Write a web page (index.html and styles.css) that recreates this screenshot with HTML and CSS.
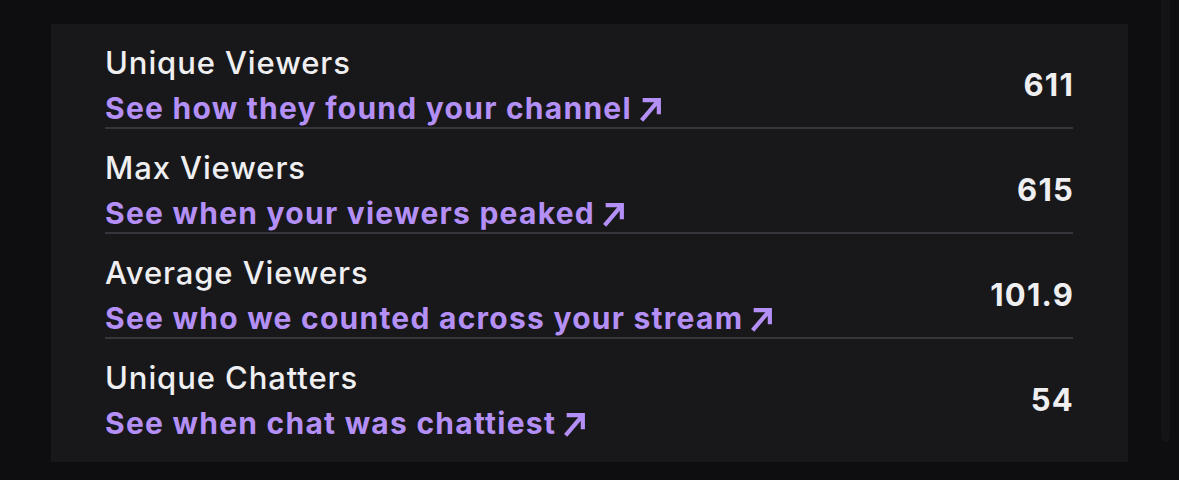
FILE: index.html
```html
<!DOCTYPE html>
<html lang="en">
<head>
<meta charset="utf-8">
<title>Stream stats</title>
<link rel="stylesheet" href="styles.css">
</head>
<body>
<div class="page">
  <main class="main">
    <section class="card">
      <div class="row">
        <div class="info">
          <div class="title">Unique Viewers</div>
          <a class="link" href="#">See how they found your channel<svg class="arrow" viewBox="0 0 20 23" aria-hidden="true"><path d="M2.5 2 H18 V15.5 M18 2 L1.5 21.5"/></svg></a>
        </div>
        <div class="value">611</div>
      </div>
      <div class="row">
        <div class="info">
          <div class="title">Max Viewers</div>
          <a class="link" href="#">See when your viewers peaked<svg class="arrow" viewBox="0 0 20 23" aria-hidden="true"><path d="M2.5 2 H18 V15.5 M18 2 L1.5 21.5"/></svg></a>
        </div>
        <div class="value">615</div>
      </div>
      <div class="row">
        <div class="info">
          <div class="title">Average Viewers</div>
          <a class="link" href="#">See who we counted across your stream<svg class="arrow" viewBox="0 0 20 23" aria-hidden="true"><path d="M2.5 2 H18 V15.5 M18 2 L1.5 21.5"/></svg></a>
        </div>
        <div class="value">101.9</div>
      </div>
      <div class="row">
        <div class="info">
          <div class="title">Unique Chatters</div>
          <a class="link" href="#">See when chat was chattiest<svg class="arrow" viewBox="0 0 20 23" aria-hidden="true"><path d="M2.5 2 H18 V15.5 M18 2 L1.5 21.5"/></svg></a>
        </div>
        <div class="value">54</div>
      </div>
    </section>
  </main>
  <div class="scrollbar"></div>
</div>
</body>
</html>
```
FILE: styles.css
```css
html, body {
  margin: 0;
  padding: 0;
}
body {
  background: #0e0e10;
  font-family: Inter, "Noto Sans", "Liberation Sans", sans-serif;
  color: #efeff1;
}
.page {
  display: flex;
  align-items: flex-start;
  height: 480px;
  overflow: hidden;
}
.main {
  padding: 24px 0 0 51px;
}
.card {
  width: 1077px;
  box-sizing: border-box;
  background: #18181b;
  padding: 0 55px 18px 54px;
}
.row {
  display: flex;
  align-items: center;
  justify-content: space-between;
  height: 105px;
  box-sizing: border-box;
  padding: 21px 0 3px;
  border-bottom: 2px solid #35353b;
}
.row:last-child {
  border-bottom: 0;
  padding-bottom: 5px;
}
.info {
  display: flex;
  flex-direction: column;
}
.title {
  font-size: 31px;
  line-height: 36px;
  font-weight: 500;
  letter-spacing: 0.9px;
  margin-bottom: 10px;
  color: #efeff1;
}
.link {
  font-size: 30px;
  line-height: 34px;
  font-weight: 700;
  letter-spacing: 1.25px;
  color: #b48ff6;
  text-decoration: none;
}
.arrow {
  width: 21px;
  height: 24px;
  margin-left: 8px;
  vertical-align: -3px;
  fill: none;
  stroke: #b48ff6;
  stroke-width: 4;
  stroke-linejoin: miter;
  stroke-linecap: butt;
}
.value {
  font-size: 31px;
  font-weight: 700;
  letter-spacing: 1.2px;
  margin-right: -1px;
  color: #efeff1;
}
.scrollbar {
  margin-left: 33px;
  width: 9px;
  height: 442px;
  background: #141417;
  border-radius: 0 0 5px 5px;
}
```
